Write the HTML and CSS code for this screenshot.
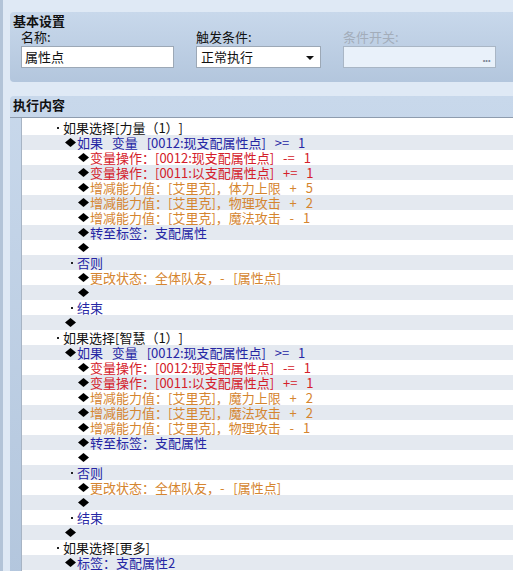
FILE: index.html
```html
<!DOCTYPE html>
<html lang="zh-CN">
<head>
  <meta charset="UTF-8" />
  <title>事件编辑</title>
  <link rel="stylesheet" href="styles.css">
</head>
<body>
  <div class="panel basic">
    <div class="panel-title">基本设置</div>
    <div class="fields">
      <div class="field f-name">
        <label>名称:</label>
        <div class="box">属性点</div>
      </div>
      <div class="field f-trigger">
        <label>触发条件:</label>
        <div class="box select">正常执行<span class="arrow"></span></div>
      </div>
      <div class="field f-switch disabled">
        <label>条件开关:</label>
        <div class="box picker"><span class="dots">...</span></div>
      </div>
    </div>
  </div>

  <div class="panel content">
    <div class="panel-title">执行内容</div>
    <div class="list-wrap">
      <div class="list">
        <div class="row lv0"><span class="mk"><i class="dot"></i></span>如果选择[力量（1）]</div>
        <div class="row lv1 blue"><span class="mk"><i class="dia"></i></span>如果&nbsp;&nbsp;变量&nbsp;&nbsp;[0012:现支配属性点]&nbsp;&nbsp;&gt;=&nbsp;&nbsp;1</div>
        <div class="row lv2 red"><span class="mk"><i class="dia"></i></span>变量操作：[0012:现支配属性点]&nbsp;&nbsp;-=&nbsp;&nbsp;1</div>
        <div class="row lv2 red"><span class="mk"><i class="dia"></i></span>变量操作：[0011:以支配属性点]&nbsp;&nbsp;+=&nbsp;&nbsp;1</div>
        <div class="row lv2 orange"><span class="mk"><i class="dia"></i></span>增减能力值：[艾里克]，体力上限&nbsp;&nbsp;+&nbsp;&nbsp;5</div>
        <div class="row lv2 orange"><span class="mk"><i class="dia"></i></span>增减能力值：[艾里克]，物理攻击&nbsp;&nbsp;+&nbsp;&nbsp;2</div>
        <div class="row lv2 orange"><span class="mk"><i class="dia"></i></span>增减能力值：[艾里克]，魔法攻击&nbsp;&nbsp;-&nbsp;&nbsp;1</div>
        <div class="row lv2 blue"><span class="mk"><i class="dia"></i></span>转至标签：支配属性</div>
        <div class="row lv2"><span class="mk"><i class="dia"></i></span></div>
        <div class="row lv1 blue"><span class="mk"><i class="dot"></i></span>否则</div>
        <div class="row lv2 orange"><span class="mk"><i class="dia"></i></span>更改状态：全体队友，-&nbsp;&nbsp;[属性点]</div>
        <div class="row lv2"><span class="mk"><i class="dia"></i></span></div>
        <div class="row lv1 blue"><span class="mk"><i class="dot"></i></span>结束</div>
        <div class="row lv1"><span class="mk"><i class="dia"></i></span></div>
        <div class="row lv0"><span class="mk"><i class="dot"></i></span>如果选择[智慧（1）]</div>
        <div class="row lv1 blue"><span class="mk"><i class="dia"></i></span>如果&nbsp;&nbsp;变量&nbsp;&nbsp;[0012:现支配属性点]&nbsp;&nbsp;&gt;=&nbsp;&nbsp;1</div>
        <div class="row lv2 red"><span class="mk"><i class="dia"></i></span>变量操作：[0012:现支配属性点]&nbsp;&nbsp;-=&nbsp;&nbsp;1</div>
        <div class="row lv2 red"><span class="mk"><i class="dia"></i></span>变量操作：[0011:以支配属性点]&nbsp;&nbsp;+=&nbsp;&nbsp;1</div>
        <div class="row lv2 orange"><span class="mk"><i class="dia"></i></span>增减能力值：[艾里克]，魔力上限&nbsp;&nbsp;+&nbsp;&nbsp;2</div>
        <div class="row lv2 orange"><span class="mk"><i class="dia"></i></span>增减能力值：[艾里克]，魔法攻击&nbsp;&nbsp;+&nbsp;&nbsp;2</div>
        <div class="row lv2 orange"><span class="mk"><i class="dia"></i></span>增减能力值：[艾里克]，物理攻击&nbsp;&nbsp;-&nbsp;&nbsp;1</div>
        <div class="row lv2 blue"><span class="mk"><i class="dia"></i></span>转至标签：支配属性</div>
        <div class="row lv2"><span class="mk"><i class="dia"></i></span></div>
        <div class="row lv1 blue"><span class="mk"><i class="dot"></i></span>否则</div>
        <div class="row lv2 orange"><span class="mk"><i class="dia"></i></span>更改状态：全体队友，-&nbsp;&nbsp;[属性点]</div>
        <div class="row lv2"><span class="mk"><i class="dia"></i></span></div>
        <div class="row lv1 blue"><span class="mk"><i class="dot"></i></span>结束</div>
        <div class="row lv1"><span class="mk"><i class="dia"></i></span></div>
        <div class="row lv0"><span class="mk"><i class="dot"></i></span>如果选择[更多]</div>
        <div class="row lv1 blue"><span class="mk"><i class="dia"></i></span>标签：支配属性2</div>
      </div>
    </div>
  </div>
</body>
</html>
```

FILE: styles.css
```css
body {
  margin: 0;
  height: 571px;
  overflow: hidden;
  background: #dfe9f5;
  border-left: 3px solid #b3c4d8;
  padding: 12px 0 0 7px;
  box-sizing: border-box;
  font-family: "Noto Sans CJK SC", "Liberation Sans", sans-serif;
  font-size: 13px;
  color: #111;
  text-spacing-trim: space-all;
}
.panel {
  background: linear-gradient(#c8d8eb, #b3c6dd);
  border-radius: 4px 0 0 4px;
}
.panel-title {
  font-weight: bold;
  font-size: 13px;
  line-height: 16px;
  padding-left: 3px;
  color: #111;
}
.basic {
  height: 70px;
  padding-top: 1px;
  box-sizing: border-box;
}
.fields {
  display: flex;
  gap: 22px;
  padding-left: 11px;
}
.field label {
  display: block;
  line-height: 16px;
  height: 17px;
}
.f-name, .f-switch { width: 153px; }
.f-trigger { width: 125px; }
.box {
  height: 22px;
  box-sizing: border-box;
  background: #fff;
  border: 1px solid #9ca8b6;
  line-height: 20px;
  padding-left: 3px;
  position: relative;
}
.select { padding-left: 4px; }
.arrow {
  position: absolute;
  right: 6px;
  top: 9px;
  border-left: 4px solid transparent;
  border-right: 4px solid transparent;
  border-top: 4px solid #111;
}
.disabled label { color: #a3adba; }
.picker {
  background: #e9f1fa;
  border-color: #a9b6c5;
  text-align: right;
  padding-right: 5px;
}
.dots {
  color: #7d8897;
  font-size: 11px;
  font-weight: bold;
  letter-spacing: -1px;
}
.content {
  margin-top: 14px;
  height: 480px;
  padding-top: 1px;
}
.content .panel-title {
  height: 20px;
  border-bottom: 1px solid #8e9cae;
}
.list-wrap {
  padding-left: 11px;
}
.list {
  background: #fff;
  border-left: 1px solid #a7b4c4;
  padding-top: 2px;
  height: 460px;
}
.row {
  height: 15px;
  line-height: 15px;
  white-space: nowrap;
  word-spacing: 1.5px;
  color: #111;
}
.row:nth-child(even) { background: #e4e9f0; }
.lv0 { padding-left: 27px; }
.lv1 { padding-left: 41px; }
.lv2 { padding-left: 54px; }
.mk {
  display: inline-block;
  width: 14px;
  text-align: right;
  vertical-align: top;
  height: 15px;
}
.dot {
  display: inline-block;
  width: 2px;
  height: 2px;
  background: #222;
  margin: 7px 4px 0 0;
  vertical-align: top;
}
.dia {
  display: inline-block;
  width: 11px;
  height: 9px;
  background: #000;
  clip-path: polygon(50% 0, 100% 50%, 50% 100%, 0 50%);
  margin: 3px 1px 0 0;
  vertical-align: top;
}
.blue { color: #2626a4; }
.red { color: #d4202a; }
.orange { color: #d5852f; }
```
